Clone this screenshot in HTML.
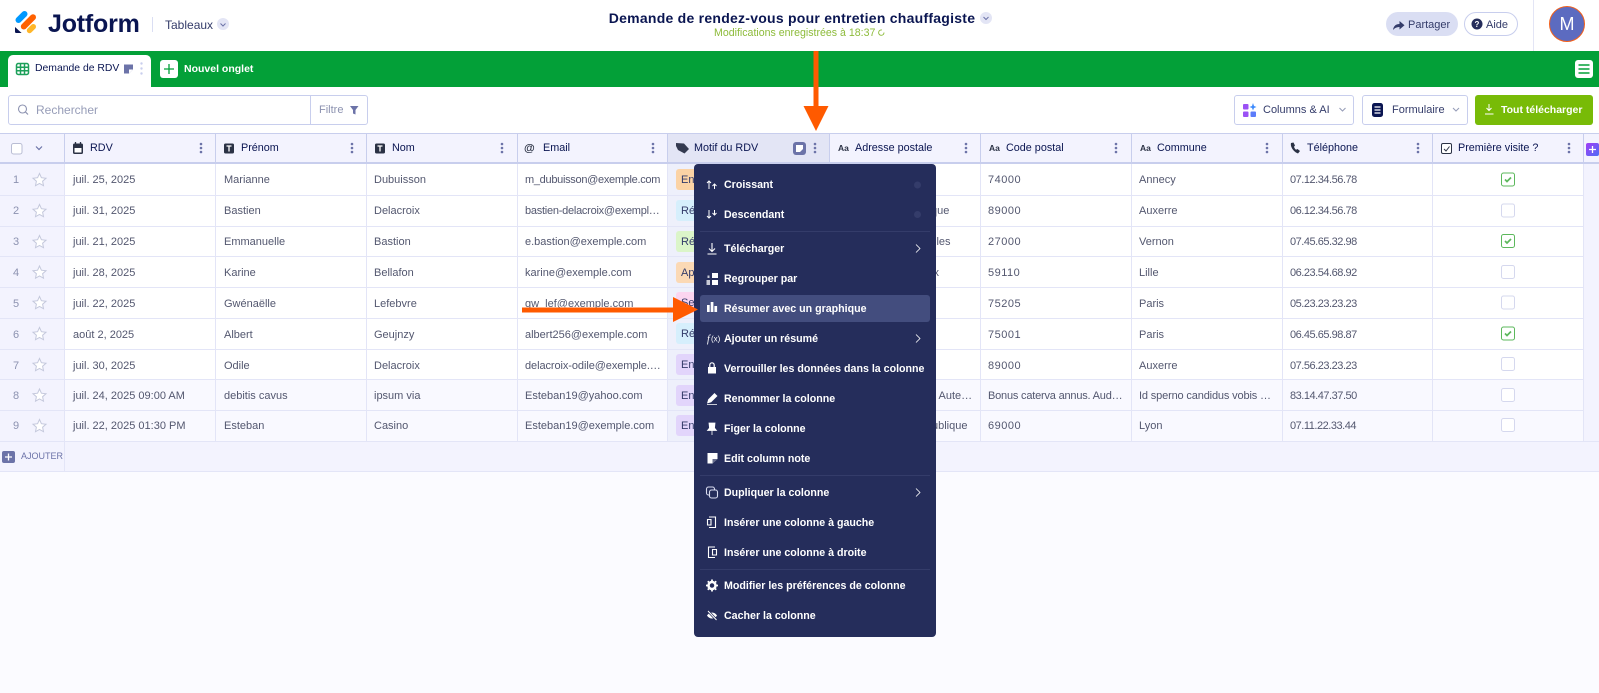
<!DOCTYPE html>
<html lang="fr"><head><meta charset="utf-8"><title>Jotform Tableaux</title>
<style>
html,body{margin:0;padding:0;width:1599px;height:693px;overflow:hidden;background:#fbfbff}
body{position:relative;font-family:"Liberation Sans",sans-serif;color:#0a1551}
div{position:absolute;box-sizing:border-box}
.t{white-space:nowrap;height:16px;line-height:16px;font-size:11px;color:#53576f;margin-top:1px}
.tg{white-space:nowrap;left:676px;width:60px;height:21px;line-height:23px;font-size:11px;border-radius:3px;padding-left:5px;color:#343c6a}
.h{white-space:nowrap;height:16px;line-height:16px;font-size:10.8px;color:#0a1551;top:140px}
.m{white-space:nowrap;height:16px;line-height:16px;font-size:10.65px;font-weight:700;color:#fff;left:724px;margin-top:1px}
.l{background:#e3e5f7}
.p{letter-spacing:-.47px}
.z{letter-spacing:.5px}
svg{position:absolute;left:0;top:0}
</style></head><body>

<!-- header -->
<div style="left:0;top:0;width:1599px;height:51px;background:#fff"></div>
<div style="left:48px;top:7px;height:34px;line-height:34px;font-size:25px;font-weight:700;color:#0a1551;letter-spacing:-.2px">Jotform</div>
<div style="left:152px;top:17px;width:1px;height:15px;background:#dadef3"></div>
<div class="t" style="left:165px;top:16px;font-size:12px;color:#343c6a">Tableaux</div>
<div style="left:217px;top:18px;width:12px;height:12px;border-radius:6px;background:#e3e5f5"></div>
<div style="left:562px;top:9px;width:460px;height:18px;line-height:18px;text-align:center;font-size:14px;font-weight:700;color:#0a1551;letter-spacing:.25px;white-space:nowrap">Demande de rendez-vous pour entretien chauffagiste</div>
<div style="left:980px;top:12px;width:12px;height:12px;border-radius:6px;background:#e3e5f5"></div>
<div class="t" style="left:714px;top:24px;font-size:10.6px;color:#8dbb3a">Modifications enregistrées à 18:37</div>
<div style="left:1386px;top:12px;width:72px;height:24px;border-radius:12px;background:#dadef3"></div>
<div class="t" style="left:1408px;top:16px;color:#343c6a">Partager</div>
<div style="left:1464px;top:12px;width:54px;height:24px;border-radius:12px;border:1px solid #c8ceed;background:#fff"></div>
<div class="t" style="left:1486px;top:16px;color:#343c6a">Aide</div>
<div style="left:1533px;top:0;width:1px;height:51px;background:#e3e5f5"></div>
<div style="left:1549px;top:6px;width:36px;height:36px;border-radius:18px;background:#5c6bc0;border:1px solid #f2601c;color:#fff;text-align:center;line-height:34px;font-size:18px">M</div>

<!-- green bar -->
<div style="left:0;top:51px;width:1599px;height:36px;background:#03a038"></div>
<div style="left:8px;top:55px;width:143px;height:32px;background:#fff;border-radius:5px 5px 0 0"></div>
<div class="t" style="left:35px;top:60px;color:#0a1551;font-size:10.4px">Demande de RDV</div>
<div style="left:160px;top:60px;width:18px;height:18px;background:#fff;border-radius:3px"></div>
<div class="t" style="left:184px;top:60px;color:#fff;font-weight:700;font-size:10.5px">Nouvel onglet</div>
<div style="left:1575px;top:60px;width:18px;height:18px;background:#fff;border-radius:3px"></div>

<!-- toolbar -->
<div style="left:0;top:87px;width:1599px;height:46px;background:#fff"></div>
<div style="left:8px;top:95px;width:360px;height:30px;border:1px solid #c8ceed;border-radius:3px;background:#fff"></div>
<div style="left:310px;top:95px;width:1px;height:30px;background:#c8ceed"></div>
<div class="t" style="left:36px;top:101px;font-size:12px;color:#979db8">Rechercher</div>
<div class="t" style="left:319px;top:101px;color:#8c92b0;font-size:11px">Filtre</div>
<div style="left:1234px;top:95px;width:120px;height:30px;border:1px solid #c8ceed;border-radius:3px;background:#fff"></div>
<div class="t" style="left:1263px;top:101px;color:#343c6a">Columns &amp; AI</div>
<div style="left:1362px;top:95px;width:106px;height:30px;border:1px solid #c8ceed;border-radius:3px;background:#fff"></div>
<div class="t" style="left:1392px;top:101px;color:#343c6a">Formulaire</div>
<div style="left:1475px;top:95px;width:118px;height:30px;background:#78bb07;border-radius:3px"></div>
<div class="t" style="left:1501px;top:101px;color:#fff;font-weight:700;font-size:10.5px">Tout télécharger</div>

<!-- table backgrounds -->
<div style="left:0;top:133px;width:1599px;height:31px;background:#f3f3fe;border-top:1px solid #c8ceed;border-bottom:2px solid #c8ceed"></div>
<div style="left:667px;top:134px;width:162px;height:28px;background:#e3e5f5"></div>
<div style="left:0;top:164px;width:64px;height:277px;background:#f3f3fe"></div>
<div style="left:1583px;top:164px;width:16px;height:277px;background:#f3f3fe"></div>
<div style="left:64px;top:164px;width:1519px;height:215px;background:#fff"></div>
<div style="left:64px;top:379px;width:1519px;height:62px;background:#f9f9ff"></div>
<div style="left:667px;top:164px;width:162px;height:277px;background:#eef0fb"></div>
<div style="left:0;top:441px;width:1599px;height:31px;background:#f3f3fe;border-bottom:1px solid #e3e5f7"></div>

<!-- row lines -->
<div class="l" style="left:0;top:195px;width:1583px;height:1px"></div>
<div class="l" style="left:0;top:226px;width:1583px;height:1px"></div>
<div class="l" style="left:0;top:256px;width:1583px;height:1px"></div>
<div class="l" style="left:0;top:287px;width:1583px;height:1px"></div>
<div class="l" style="left:0;top:318px;width:1583px;height:1px"></div>
<div class="l" style="left:0;top:349px;width:1583px;height:1px"></div>
<div class="l" style="left:0;top:379px;width:1583px;height:1px"></div>
<div class="l" style="left:0;top:410px;width:1583px;height:1px"></div>
<div class="l" style="left:0;top:441px;width:1599px;height:1px"></div>

<!-- column lines -->
<div style="left:64px;top:134px;width:1px;height:29px;background:#c8ceed"></div>
<div style="left:215px;top:134px;width:1px;height:29px;background:#c8ceed"></div>
<div style="left:366px;top:134px;width:1px;height:29px;background:#c8ceed"></div>
<div style="left:517px;top:134px;width:1px;height:29px;background:#c8ceed"></div>
<div style="left:667px;top:134px;width:1px;height:29px;background:#c8ceed"></div>
<div style="left:829px;top:134px;width:1px;height:29px;background:#c8ceed"></div>
<div style="left:980px;top:134px;width:1px;height:29px;background:#c8ceed"></div>
<div style="left:1131px;top:134px;width:1px;height:29px;background:#c8ceed"></div>
<div style="left:1282px;top:134px;width:1px;height:29px;background:#c8ceed"></div>
<div style="left:1432px;top:134px;width:1px;height:29px;background:#c8ceed"></div>
<div style="left:1583px;top:134px;width:1px;height:29px;background:#c8ceed"></div>
<div class="l" style="left:64px;top:164px;width:1px;height:308px"></div>
<div class="l" style="left:215px;top:164px;width:1px;height:277px"></div>
<div class="l" style="left:366px;top:164px;width:1px;height:277px"></div>
<div class="l" style="left:517px;top:164px;width:1px;height:277px"></div>
<div class="l" style="left:667px;top:164px;width:1px;height:277px"></div>
<div class="l" style="left:829px;top:164px;width:1px;height:277px"></div>
<div class="l" style="left:980px;top:164px;width:1px;height:277px"></div>
<div class="l" style="left:1131px;top:164px;width:1px;height:277px"></div>
<div class="l" style="left:1282px;top:164px;width:1px;height:277px"></div>
<div class="l" style="left:1432px;top:164px;width:1px;height:277px"></div>
<div class="l" style="left:1583px;top:164px;width:1px;height:277px"></div>

<!-- header text -->
<div class="h" style="left:90px">RDV</div>
<div class="h" style="left:241px">Prénom</div>
<div class="h" style="left:392px">Nom</div>
<div class="h" style="left:543px">Email</div>
<div class="h" style="left:694px">Motif du RDV</div>
<div class="h" style="left:855px">Adresse postale</div>
<div class="h" style="left:1006px">Code postal</div>
<div class="h" style="left:1157px">Commune</div>
<div class="h" style="left:1307px">Téléphone</div>
<div class="h" style="left:1458px">Première visite ?</div>

<!-- row numbers -->
<div class="t" style="left:10px;width:12px;text-align:center;top:171px;color:#8c92b0">1</div>
<div class="t" style="left:10px;width:12px;text-align:center;top:202px;color:#8c92b0">2</div>
<div class="t" style="left:10px;width:12px;text-align:center;top:233px;color:#8c92b0">3</div>
<div class="t" style="left:10px;width:12px;text-align:center;top:264px;color:#8c92b0">4</div>
<div class="t" style="left:10px;width:12px;text-align:center;top:295px;color:#8c92b0">5</div>
<div class="t" style="left:10px;width:12px;text-align:center;top:326px;color:#8c92b0">6</div>
<div class="t" style="left:10px;width:12px;text-align:center;top:357px;color:#8c92b0">7</div>
<div class="t" style="left:10px;width:12px;text-align:center;top:387px;color:#8c92b0">8</div>
<div class="t" style="left:10px;width:12px;text-align:center;top:417px;color:#8c92b0">9</div>

<!-- RDV -->
<div class="t" style="left:73px;top:171px">juil. 25, 2025</div>
<div class="t" style="left:73px;top:202px">juil. 31, 2025</div>
<div class="t" style="left:73px;top:233px">juil. 21, 2025</div>
<div class="t" style="left:73px;top:264px">juil. 28, 2025</div>
<div class="t" style="left:73px;top:295px">juil. 22, 2025</div>
<div class="t" style="left:73px;top:326px">août 2, 2025</div>
<div class="t" style="left:73px;top:357px">juil. 30, 2025</div>
<div class="t" style="left:73px;top:387px">juil. 24, 2025 09:00 AM</div>
<div class="t" style="left:73px;top:417px">juil. 22, 2025 01:30 PM</div>
<!-- Prénom -->
<div class="t" style="left:224px;top:171px">Marianne</div>
<div class="t" style="left:224px;top:202px">Bastien</div>
<div class="t" style="left:224px;top:233px">Emmanuelle</div>
<div class="t" style="left:224px;top:264px">Karine</div>
<div class="t" style="left:224px;top:295px">Gwénaëlle</div>
<div class="t" style="left:224px;top:326px">Albert</div>
<div class="t" style="left:224px;top:357px">Odile</div>
<div class="t" style="left:224px;top:387px">debitis cavus</div>
<div class="t" style="left:224px;top:417px">Esteban</div>
<!-- Nom -->
<div class="t" style="left:374px;top:171px">Dubuisson</div>
<div class="t" style="left:374px;top:202px">Delacroix</div>
<div class="t" style="left:374px;top:233px">Bastion</div>
<div class="t" style="left:374px;top:264px">Bellafon</div>
<div class="t" style="left:374px;top:295px">Lefebvre</div>
<div class="t" style="left:374px;top:326px">Geujnzy</div>
<div class="t" style="left:374px;top:357px">Delacroix</div>
<div class="t" style="left:374px;top:387px">ipsum via</div>
<div class="t" style="left:374px;top:417px">Casino</div>
<!-- Email -->
<div class="t" style="left:525px;top:171px;letter-spacing:-.3px">m_dubuisson@exemple.com</div>
<div class="t" style="left:525px;top:202px;letter-spacing:-.25px">bastien-delacroix@exempl…</div>
<div class="t" style="left:525px;top:233px">e.bastion@exemple.com</div>
<div class="t" style="left:525px;top:264px">karine@exemple.com</div>
<div class="t" style="left:525px;top:295px">gw_lef@exemple.com</div>
<div class="t" style="left:525px;top:326px">albert256@exemple.com</div>
<div class="t" style="left:525px;top:357px;letter-spacing:-.08px">delacroix-odile@exemple.…</div>
<div class="t" style="left:525px;top:387px">Esteban19@yahoo.com</div>
<div class="t" style="left:525px;top:417px">Esteban19@exemple.com</div>
<!-- Motif tags -->
<div class="tg" style="top:169px;background:#fbd3a5">Entretien</div>
<div class="tg" style="top:200px;background:#d6effc">Réparation</div>
<div class="tg" style="top:231px;background:#dbf5c9">Réparation</div>
<div class="tg" style="top:262px;background:#fbd9b5">Appel</div>
<div class="tg" style="top:292px;background:#fbd5f0">Service</div>
<div class="tg" style="top:323px;background:#d6effc">Réparation</div>
<div class="tg" style="top:354px;background:#e2d5fb">Entretien</div>
<div class="tg" style="top:385px;background:#e2d5fb">Entretien</div>
<div class="tg" style="top:415px;background:#e2d5fb">Entretien</div>
<!-- Adresse remnants -->
<div class="t" style="left:931px;top:202px">que</div>
<div class="t" style="left:934px;top:233px">lles</div>
<div class="t" style="left:933.500px;top:264px">x</div>
<div class="t" style="left:933px;top:387px">. Aute…</div>
<div class="t" style="left:932px;top:417px">ublique</div>
<!-- Code postal -->
<div class="t z" style="left:988px;top:171px">74000</div>
<div class="t z" style="left:988px;top:202px">89000</div>
<div class="t z" style="left:988px;top:233px">27000</div>
<div class="t z" style="left:988px;top:264px">59110</div>
<div class="t z" style="left:988px;top:295px">75205</div>
<div class="t z" style="left:988px;top:326px">75001</div>
<div class="t z" style="left:988px;top:357px">89000</div>
<div class="t" style="left:988px;top:387px;letter-spacing:-.2px">Bonus caterva annus. Aud…</div>
<div class="t z" style="left:988px;top:417px">69000</div>
<!-- Commune -->
<div class="t" style="left:1139px;top:171px">Annecy</div>
<div class="t" style="left:1139px;top:202px">Auxerre</div>
<div class="t" style="left:1139px;top:233px">Vernon</div>
<div class="t" style="left:1139px;top:264px">Lille</div>
<div class="t" style="left:1139px;top:295px">Paris</div>
<div class="t" style="left:1139px;top:326px">Paris</div>
<div class="t" style="left:1139px;top:357px">Auxerre</div>
<div class="t" style="left:1139px;top:387px;letter-spacing:-.15px">Id sperno candidus vobis …</div>
<div class="t" style="left:1139px;top:417px">Lyon</div>
<!-- Téléphone -->
<div class="t p" style="left:1290px;top:171px">07.12.34.56.78</div>
<div class="t p" style="left:1290px;top:202px">06.12.34.56.78</div>
<div class="t p" style="left:1290px;top:233px">07.45.65.32.98</div>
<div class="t p" style="left:1290px;top:264px">06.23.54.68.92</div>
<div class="t p" style="left:1290px;top:295px">05.23.23.23.23</div>
<div class="t p" style="left:1290px;top:326px">06.45.65.98.87</div>
<div class="t p" style="left:1290px;top:357px">07.56.23.23.23</div>
<div class="t p" style="left:1290px;top:387px">83.14.47.37.50</div>
<div class="t p" style="left:1290px;top:417px">07.11.22.33.44</div>

<div class="t" style="left:21px;top:447px;font-size:9px;color:#6c73a8">AJOUTER</div>

<!-- icons below menu -->
<svg width="1599" height="693" viewBox="0 0 1599 693">
<defs>
<path id="star" d="M0-6.500 1.900-2.300 6.500-1.800 3.100 1.200 4 5.700 0 3.400-4 5.700-3.100 1.200-6.500-1.800-1.900-2.300Z" fill="#fff" stroke="#c4c8dc" stroke-width="1"/>
<g id="keb" fill="#6c73a8"><circle cx="0" cy="-4" r="1.300"/><circle cx="0" cy="0" r="1.300"/><circle cx="0" cy="4" r="1.300"/></g>
<g id="aa"><text x="0" y="3" font-family="Liberation Sans" font-size="8.500" font-weight="700" fill="#2b3245">Aa</text></g>
<g id="T"><rect x="-5" y="-5" width="10" height="10" rx="1.500" fill="#2b3245"/><path d="M-2.500-2.500H2.500M0-2.500V3" stroke="#fff" stroke-width="1.300" fill="none"/></g>
<g id="ck"><rect x="-6.500" y="-6.500" width="13" height="13" rx="2" fill="#fff" stroke="#5cb85c" stroke-width="1"/><path d="M-3 0-1 2 3-2" fill="none" stroke="#5cb85c" stroke-width="1.700"/></g>
<rect id="un" x="-6.500" y="-6.500" width="13" height="13" rx="2" fill="#fff" stroke="#d5d8ee" stroke-width="1"/>
<linearGradient id="g" x1="0" x2="1" y1="0" y2="1"><stop offset="0" stop-color="#a33df5"/><stop offset="1" stop-color="#4c6ef5"/></linearGradient>
</defs>
<!-- logo -->
<path d="M18.500 20 24.500 14" stroke="#0099ff" stroke-width="6" stroke-linecap="round"/>
<path d="M23.800 26.500 33 17.300" stroke="#ff6100" stroke-width="6" stroke-linecap="round"/>
<path d="M29.500 30.500 33.300 26.700" stroke="#ffb629" stroke-width="5.400" stroke-linecap="round"/>
<path d="M15 27 21.600 33H16.400Q15 33 15 31.600Z" fill="#0a1551"/>
<!-- chevrons -->
<path d="M220.500 23.500 223 26 225.500 23.500M983.500 17 986 19.500 988.500 17" fill="none" stroke="#6c73a8" stroke-width="1"/>
<!-- saving spinner -->
<path d="M884 32.500A2.700 2.700 0 1 1 882 30" fill="none" stroke="#8dbb3a" stroke-width=".9"/>
<!-- partager -->
<path d="M1393 30C1393.500 26 1396 24 1399.500 24V21L1404.500 25.300 1399.500 29.500V27C1397 27 1394.800 27.800 1393 30Z" fill="#343c6a"/>
<!-- aide -->
<circle cx="1477" cy="24" r="5.500" fill="#252d5b"/><text x="1477" y="27" text-anchor="middle" font-family="Liberation Sans" font-size="8" font-weight="700" fill="#fff">?</text>
<!-- tab -->
<rect x="16.500" y="63.500" width="12" height="11" rx="1.800" fill="#fff" stroke="#1da05a" stroke-width="1.500"/>
<path d="M16.500 67.200H28.500M16.500 70.800H28.500M20.500 63.500V74.500M24.500 63.500V74.500" stroke="#1da05a" stroke-width="1.500"/>
<path d="M124 64.500H133V69.500L129 73.500H124Z" fill="#6c73a8"/><path d="M129 73.500V69.500H133Z" fill="#fff"/>
<g fill="#c8ceed"><circle cx="141.500" cy="63.500" r="1.200"/><circle cx="141.500" cy="68.500" r="1.200"/><circle cx="141.500" cy="73.500" r="1.200"/></g>
<path d="M169 64V74M164 69H174" stroke="#03a038" stroke-width="1.300"/>
<path d="M1578.500 65H1589.500M1578.500 69H1589.500M1578.500 73H1589.500" stroke="#03a038" stroke-width="1.500"/>
<!-- search -->
<circle cx="22.500" cy="109" r="4" fill="none" stroke="#8c92b0" stroke-width="1.100"/><path d="M25.500 112 28 114.500" stroke="#8c92b0" stroke-width="1.200"/>
<path d="M350 106H358.500L355.500 110V114.500L353 113.500V110Z" fill="#6c73a8"/>
<!-- columns -->
<rect x="1243" y="104" width="5.500" height="5.500" rx="1" fill="#9b51f5"/><rect x="1243" y="111.500" width="5.500" height="5.500" rx="1" fill="#9b51f5"/><rect x="1250.500" y="111.500" width="5.500" height="5.500" rx="1" fill="#5c7cfa"/><path d="M1253 103 1254 106 1256.500 107 1254 108 1253 110.500 1252 108 1249.500 107 1252 106Z" fill="#3d8bfd"/>
<path d="M1339.500 108 1342.500 111 1345.500 108M1453 108 1456 111 1459 108" fill="none" stroke="#979db8" stroke-width="1.100"/>
<rect x="1372" y="103" width="11" height="14" rx="2.500" fill="#0a1551"/><path d="M1374.500 107H1380.500M1374.500 110H1380.500M1374.500 113H1380.500" stroke="#fff" stroke-width="1.200"/>
<path d="M1489 104V110.500M1486.500 108 1489 110.500 1491.500 108M1485 114H1493.500" fill="none" stroke="#fff" stroke-width="1"/>
<!-- table head -->
<rect x="11.500" y="143.500" width="10.500" height="10.500" rx="2" fill="#fff" stroke="#b9bdd4"/>
<path d="M36 146.500 39 149.500 42 146.500" fill="none" stroke="#6c73a8" stroke-width="1.200"/>
<rect x="73" y="143.500" width="10" height="10.500" rx="1.500" fill="#2b3245"/><path d="M75.500 142V145M80.500 142V145" stroke="#2b3245" stroke-width="1.300"/><rect x="74.500" y="148" width="7" height="4.500" fill="#fff"/>
<use href="#T" x="229" y="148.500"/><use href="#T" x="380" y="148.500"/>
<text x="524" y="151.500" font-family="Liberation Sans" font-size="11" font-weight="700" fill="#2b3245">@</text>
<path d="M676 143 684 143.500 689 149 684.500 153.500 678 150 676 146Z" fill="#343a50"/>
<use href="#aa" x="838" y="148"/><use href="#aa" x="989" y="148"/><use href="#aa" x="1140" y="148"/>
<path d="M1291 143C1290 147 1294 152 1298 153.500L1300 151 1297.500 149 1296 149.800C1295 149 1294.300 147.800 1294 146.800L1295 145.500 1293.500 142.500Z" fill="#2b3245"/>
<rect x="1441.500" y="143.500" width="10" height="10" rx="1.500" fill="#fff" stroke="#2b3245"/><path d="M1444 149 1446 151 1449.500 146.500" fill="none" stroke="#2b3245"/>
<use href="#keb" x="201" y="148"/><use href="#keb" x="352" y="148"/><use href="#keb" x="502" y="148"/><use href="#keb" x="653" y="148"/><use href="#keb" x="815" y="148"/><use href="#keb" x="966" y="148"/><use href="#keb" x="1116" y="148"/><use href="#keb" x="1267" y="148"/><use href="#keb" x="1418" y="148"/><use href="#keb" x="1569" y="148"/>
<rect x="793" y="142" width="13" height="13" rx="3" fill="#6c73a8"/><path d="M796 145H803V149L800 152H796Z" fill="#fff"/>
<rect x="1586" y="143" width="13" height="13" rx="2" fill="url(#g)"/><path d="M1589 149.500H1596M1592.500 146V153" stroke="#fff" stroke-width="1.300"/>
<!-- stars -->
<use href="#star" x="39.500" y="180"/><use href="#star" x="39.500" y="211"/><use href="#star" x="39.500" y="242"/><use href="#star" x="39.500" y="272.500"/><use href="#star" x="39.500" y="303"/><use href="#star" x="39.500" y="334"/><use href="#star" x="39.500" y="365"/><use href="#star" x="39.500" y="395.500"/><use href="#star" x="39.500" y="426"/>
<!-- checkboxes -->
<use href="#ck" x="1508" y="179.500"/><use href="#un" x="1508" y="210.500"/><use href="#ck" x="1508" y="241"/><use href="#un" x="1508" y="272"/><use href="#un" x="1508" y="302.500"/><use href="#ck" x="1508" y="333.500"/><use href="#un" x="1508" y="364"/><use href="#un" x="1508" y="395"/><use href="#un" x="1508" y="425"/>
<!-- ajouter -->
<rect x="2" y="451" width="13" height="12" rx="2" fill="#6c73a8"/><path d="M5 457H12M8.500 453.500V460.500" stroke="#fff" stroke-width="1.300"/>
</svg>

<!-- menu -->
<div style="left:694px;top:164px;width:242px;height:473px;background:#252d5b;border-radius:4px"></div>
<div style="left:700px;top:295px;width:230px;height:27px;background:#434d7e;border-radius:3px"></div>
<div style="left:700px;top:231px;width:230px;height:1px;background:#343c6a"></div>
<div style="left:700px;top:475px;width:230px;height:1px;background:#343c6a"></div>
<div style="left:700px;top:569px;width:230px;height:1px;background:#343c6a"></div>
<div class="m" style="top:176px">Croissant</div>
<div class="m" style="top:206px">Descendant</div>
<div class="m" style="top:240px">Télécharger</div>
<div class="m" style="top:270px">Regrouper par</div>
<div class="m" style="top:300px">Résumer avec un graphique</div>
<div class="m" style="top:330px">Ajouter un résumé</div>
<div class="m" style="top:360px">Verrouiller les données dans la colonne</div>
<div class="m" style="top:390px">Renommer la colonne</div>
<div class="m" style="top:420px">Figer la colonne</div>
<div class="m" style="top:450px">Edit column note</div>
<div class="m" style="top:484px">Dupliquer la colonne</div>
<div class="m" style="top:514px">Insérer une colonne à gauche</div>
<div class="m" style="top:544px">Insérer une colonne à droite</div>
<div class="m" style="top:577px">Modifier les préférences de colonne</div>
<div class="m" style="top:607px">Cacher la colonne</div>

<svg width="1599" height="693" viewBox="0 0 1599 693">
<g fill="none" stroke="#fff" stroke-width="1">
<path d="M709 189V181M707 183 709 181 711 183M714.500 189V184M712.500 186 714.500 184 716.500 186"/>
<path d="M709 210V218M707 216 709 218 711 216M714.500 210V215M712.500 213 714.500 215 716.500 213"/>
<path d="M712 243V251M709 248.500 712 251.500 715 248.500M707.500 254H716.500" stroke-width="1.100"/>
<path d="M916 244.500 920 248.500 916 252.500M916 334.500 920 338.500 916 342.500M916 488.500 920 492.500 916 496.500" stroke-width=".8"/>
</g>
<g fill="#fff">
<rect x="712" y="273" width="6" height="5"/><rect x="712" y="280" width="6" height="5"/><rect x="706.500" y="280" width="3.500" height="5" opacity=".75"/><rect x="707.500" y="275.500" width="2" height="2.500" opacity=".75"/>
<rect x="707" y="305" width="2.700" height="7"/><rect x="710.700" y="302" width="2.700" height="10"/><rect x="714.400" y="306" width="2.700" height="6"/>
</g>
<text x="707" y="342" font-family="Liberation Serif" font-style="italic" font-size="10" fill="#fff">f</text>
<text x="711" y="341.500" font-family="Liberation Sans" font-size="8" fill="#fff">(x)</text>
<path d="M708 367H716V373.500H708Z" fill="#fff"/><path d="M709.800 367V365A2.200 2.200 0 0 1 714.200 365V367" fill="none" stroke="#fff" stroke-width="1.200"/>
<path d="M707.500 403 708.500 399.500 714.500 393.500 717 396 711 402ZM707 404.500H717" fill="#fff" stroke="#fff" stroke-width=".7"/>
<path d="M709 423H715L714.500 428 716.500 430.500H707.500L709.500 428ZM712 430.500V435" fill="#fff" stroke="#fff" stroke-width=".8"/>
<path d="M707.500 453H717.500V459L712.500 463.500H707.500Z" fill="#fff"/><path d="M712.500 463.500V459H717.500Z" fill="#252d5b" opacity=".7"/>
<g fill="none" stroke="#d8dbef" stroke-width="1.100">
<rect x="706.500" y="487" width="8" height="8" rx="2"/><rect x="709.500" y="490" width="8" height="8" rx="2" fill="#252d5b"/>
<path d="M709 517H715.500V527.500H709M707.500 519.500H711V525H707.500Z" stroke="#fff"/>
<path d="M715 547H708.500V557.500H715M712.500 549.500H716.500V555H712.500Z" stroke="#fff"/>
</g>
<circle cx="712" cy="585.500" r="3.500" fill="none" stroke="#fff" stroke-width="2.500"/>
<path d="M712 579.500V581M712 590V591.500M706 585.500H707.500M716.500 585.500H718M707.800 581.300 708.800 582.300M715.200 588.700 716.200 589.700M716.200 581.300 715.200 582.300M708.800 588.700 707.800 589.700" stroke="#fff" stroke-width="1.800"/>
<path d="M707 615.500C709.500 611.500 714.500 611.500 717 615.500C714.500 619.500 709.500 619.500 707 615.500Z" fill="#fff"/><path d="M708 611 716.500 620" stroke="#252d5b" stroke-width="2.500"/><path d="M708 611 716.500 620" stroke="#fff" stroke-width="1"/>
<circle cx="917.500" cy="185" r="3.500" fill="#343c6a"/><circle cx="917.500" cy="214.500" r="3.500" fill="#343c6a"/>
<!-- arrows -->
<path d="M813.500 51H818.500V106H828.500L816 131 803.500 106H813.500Z" fill="#ff5a00"/>
<path d="M522 307.500H673V297L698 309.500 673 322V312.500H522Z" fill="#ff5a00"/>
</svg>
</body></html>
